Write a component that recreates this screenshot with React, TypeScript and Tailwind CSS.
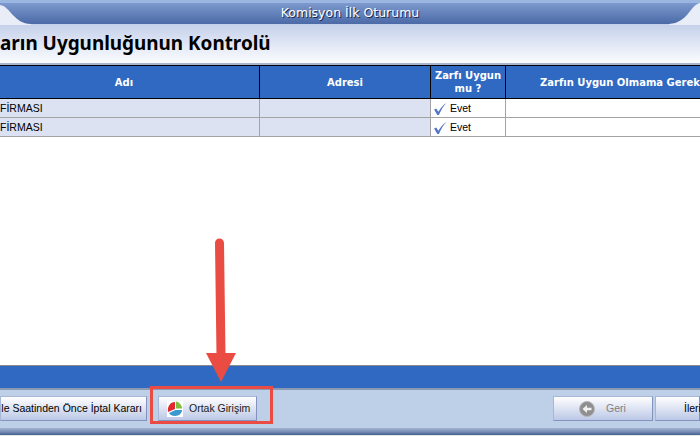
import React from "react";

const tahoma = { fontFamily: '"DejaVu Sans", sans-serif' };

const rows = ["FİRMASI", "FİRMASI"];

const PieIcon = () => (
  <svg width="16" height="16" viewBox="0 0 16 16" className="shrink-0">
    <rect width="16" height="16" fill="#ffffff" />
    <path d="M8 1 L8 8 L1 11 C0 6 3 1 8 1Z" fill="#e0282e" />
    <path d="M9 0.5 C12 1 15 4 15 7.5 L9 7.5Z" fill="#7fbf3f" />
    <path d="M2 12 L8.5 9 L15 9 C15 12 12 15 8 15 C5 15 3 14 2 12Z" fill="#3a9ad0" />
  </svg>
);

const BackIcon = () => (
  <svg width="16" height="16" viewBox="0 0 16 16" className="shrink-0">
    <circle cx="8" cy="8" r="7.5" fill="#8f8f8f" stroke="#b5b5b5" />
    <path d="M3.5 8 L8 4 L8 6.8 L12.5 6.8 L12.5 9.2 L8 9.2 L8 12Z" fill="#f2f2f2" />
  </svg>
);

const Check = () => (
  <svg width="14" height="14" viewBox="0 0 13 13" className="shrink-0">
    <path d="M1 7 L3 6 L5 9 C7 6 9 3 12.5 1 C9.5 4 7.5 7.5 5.5 12 L4 12 Z" fill="#5576c4" />
  </svg>
);

const FooterButton: React.FC<{ className?: string; children: React.ReactNode }> = (props) => (
  <div
    className={
      "h-[25px] flex items-center gap-[6px] text-[10.5px] border border-[#a9b7d6] border-b-[#8393bd] border-r-[#8393bd] bg-gradient-to-b from-[#ffffff] to-[#bcc8e6] shrink-0 " +
      (props.className || "")
    }
  >
    {props.children}
  </div>
);

export default function App() {
  return (
    <div
      className="relative w-[700px] h-[436px] overflow-hidden bg-white flex flex-col text-black"
      style={{ fontFamily: '"Liberation Sans", sans-serif' }}
    >
      {/* title bar */}
      <div className="h-[24px] shrink-0 flex items-center justify-center border-t-[3px] border-[#9cb6e2] bg-gradient-to-b from-[#7d99ce] to-[#4b6aa6]">
        <span className="text-white text-[12.5px] font-medium [text-shadow:1px_1px_0_#1c2a4c]" style={tahoma}>
          Komisyon İlk Oturumu
        </span>
      </div>

      {/* title bar corners */}
      <svg className="absolute left-0 top-0" width="32" height="26" viewBox="0 0 32 26">
        <path d="M0 5 C10 6 14 24 31 24 L31 25 L0 25Z" fill="#e8edf7" />
      </svg>
      <svg className="absolute right-0 top-0" width="32" height="26" viewBox="0 0 32 26">
        <path d="M32 3 C22 5 20 23 1 24 L1 25 L32 25Z" fill="#e8edf7" />
      </svg>

      {/* heading */}
      <div className="h-[41px] shrink-0 flex items-center bg-gradient-to-b from-[#c4d0ea] to-[#fbfcfe] border-b-[2px] border-[#a9b5d0] overflow-hidden">
        <h1 className="text-[18.9px] font-bold whitespace-nowrap" style={{ fontFamily: '"Noto Sans", sans-serif' }}>
          arın Uygunluğunun Kontrolü
        </h1>
      </div>

      {/* table header */}
      <div className="shrink-0 grid grid-cols-[260px_171px_75px_194px] h-[34px] bg-[#2f69c2] border-y border-black text-white text-[10px] font-bold" style={tahoma}>
        <div className="flex items-center justify-center pr-[11px] border-r border-black">Adı</div>
        <div className="flex items-center justify-center border-r border-black">Adresi</div>
        <div className="flex items-center justify-center text-center leading-[13px] border-r border-black">
          Zarfı Uygun
          <br />
          mu ?
        </div>
        <div className="flex items-center pl-[34px] whitespace-nowrap">Zarfın Uygun Olmama Gerek</div>
      </div>

      {/* rows */}
      {rows.map((name, i) => (
        <div key={i} className="shrink-0 grid grid-cols-[260px_171px_75px_194px] h-[19px] border-b border-[#a3a3a3] text-[10.5px]">
          <div className="flex items-center pt-[1px] bg-[#dce2f1] border-r border-[#a3a3a3]">{name}</div>
          <div className="bg-[#dce2f1] border-r border-[#a3a3a3]" />
          <div className="flex items-center gap-[3px] pl-[2px] pt-[1px] border-r border-[#a3a3a3]">
            <Check />
            <span>Evet</span>
          </div>
          <div />
        </div>
      ))}

      <div className="flex-1 bg-white" />

      {/* blue band */}
      <div className="h-[25px] shrink-0 bg-[#2f69c2] border-t border-[#8a8a8a] border-b-[2px] border-b-[#8c99b5]" />

      {/* footer */}
      <div className="h-[37px] shrink-0 flex items-start pt-[6px] bg-[#bed0e8]">
        <FooterButton className="w-[147px] justify-end pr-[4px]">
          <span className="whitespace-nowrap">le Saatinden Önce İptal Kararı</span>
        </FooterButton>
        <FooterButton className="w-[99px] ml-[11px] pl-[8px] text-[#1a1a1a]">
          <PieIcon />
          <span>Ortak Girişim</span>
        </FooterButton>
        <div className="flex-1" />
        <FooterButton className="w-[100px] pl-[25px] text-[#7f7f7f] gap-[11px]">
          <BackIcon />
          <span>Geri</span>
        </FooterButton>
        <FooterButton className="w-[45px] ml-[2px] pl-[28px]">
          <span>İleri</span>
        </FooterButton>
      </div>

      {/* bottom edge */}
      <div className="h-[8px] shrink-0 bg-gradient-to-b from-[#a3b3cf] via-[#7a90b8] to-[#445f8f] border-t border-[#bed0e8]" />
      <div className="h-[1px] shrink-0 bg-[#e6e6e6]" />

      {/* red highlight */}
      <div className="absolute left-[150px] top-[386px] w-[123px] h-[38px] border-[3px] border-[#ea4c43]" />

      {/* arrow */}
      <svg className="absolute left-[200px] top-[235px]" width="44" height="150" viewBox="0 0 44 150">
        <path d="M19.5 8 L21 120" stroke="#ea4c43" strokeWidth="9" strokeLinecap="round" fill="none" />
        <path d="M6 118 L36 118 L21 147Z" fill="#ea4c43" />
      </svg>
    </div>
  );
}
